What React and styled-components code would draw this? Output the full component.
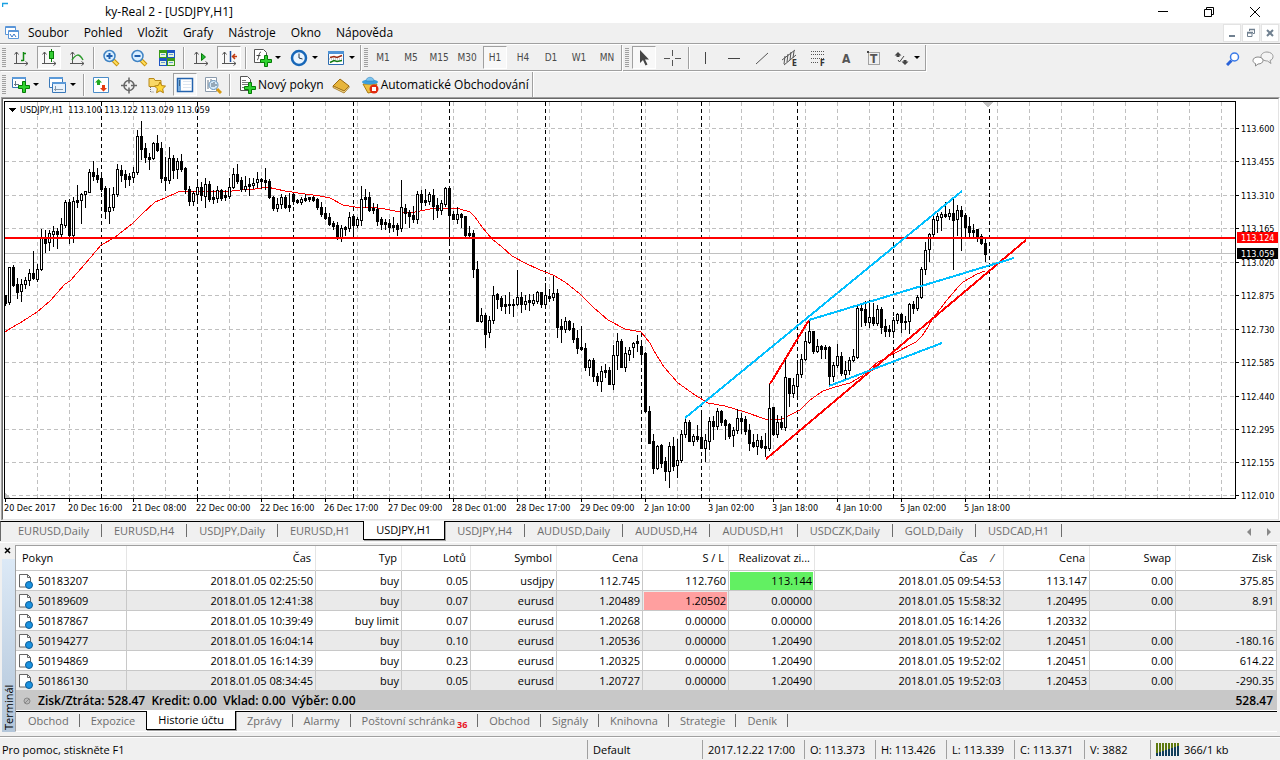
import React from 'react';
import styled, { createGlobalStyle, css } from 'styled-components';

const GlobalStyle = createGlobalStyle`
  * { box-sizing: border-box; }
  body {
    margin: 0;
    background: #f0f0f0;
    color: #000;
    font-family: "Open Sans", "Noto Sans", sans-serif;
    font-size: 11px;
    line-height: 16px;
  }
  button {
    margin: 0;
    padding: 0;
    border: 0;
    background: none;
    color: inherit;
    font: inherit;
    white-space: nowrap;
  }
  svg { display: block; flex: none; }
`;

const Page = styled.div`
  display: flex;
  flex-direction: column;
`;

/* ---------- title and menu ---------- */

const TitleBar = styled.header`
  display: flex;
  align-items: center;
  height: 23px;
  padding: 0 2px;
  background: #fff;
`;

const Title = styled.h1`
  flex: 1;
  margin: 0 0 0 76px;
  font-size: 12px;
  font-weight: 400;
`;

const WindowButton = styled.button`
  display: flex;
  align-items: center;
  justify-content: center;
  width: 46px;
  height: 21px;
`;

const MenuBar = styled.nav`
  display: flex;
  align-items: center;
  height: 21px;
  border-bottom: 1px solid #a0a0a0;
  padding: 0 1px 0 4px;
`;

const MenuList = styled.div`
  display: flex;
  flex: 1;
  gap: 15px;
  margin-left: 8px;
  font-size: 12px;
`;

const ChildButton = styled.button`
  display: flex;
  align-items: center;
  justify-content: center;
  width: 18px;
  height: 18px;
  margin-left: 1px;
  border: 1px solid #e3e3e3;
  background: #fff;
`;

/* ---------- toolbars ---------- */

const ToolRow = styled.div`
  display: flex;
  align-items: stretch;
  border-top: ${p => (p.$first ? '1px solid #fff' : '0')};
`;

const Band = styled.div`
  display: flex;
  align-items: center;
  gap: 4px;
  padding: 1px 2px;
  border-right: 1px solid #a0a0a0;
  box-shadow: 1px 0 0 #fff;
  margin-right: 1px;
  ${p => p.$ruled && css`
    border-bottom: 1px solid #a0a0a0;
    box-shadow: 1px 1px 0 #fff;
    margin-bottom: 1px;
  `}
`;

const Grip = styled.span`
  width: 4px;
  height: 20px;
  margin-right: -1px;
  background: repeating-linear-gradient(#a0a0a0 0 1px, #f0f0f0 1px 2px);
`;

const Separator = styled.span`
  width: 2px;
  height: 22px;
  border-left: 1px solid #a0a0a0;
  border-right: 1px solid #fff;
`;

const Tool = styled.button`
  display: flex;
  align-items: center;
  justify-content: ${p => (p.$wide ? 'flex-start' : 'center')};
  width: ${p => (p.$wide ? '33px' : '24px')};
  height: 23px;
  padding-left: ${p => (p.$wide ? '2px' : '0')};
  color: #4a4a4a;
  font-family: "DejaVu Sans Condensed", "Open Sans", sans-serif;
  font-size: 10px;
  ${p => p.$pressed && css`
    border: 1px solid;
    border-color: #a0a0a0 #fff #fff #a0a0a0;
    background: #f8f8f8;
  `}
`;

const LabelTool = styled(Tool)`
  width: auto;
  gap: 2px;
  padding: 0 1px 0 4px;
  color: #000;
  font-family: inherit;
  font-size: 12px;
`;

const Caret = styled.span`
  width: 0;
  margin-left: 2px;
  border: 3px solid transparent;
  border-top-color: #000;
  border-bottom: 0;
`;

const ToolEnd = styled.div`
  display: flex;
  align-items: center;
  gap: 12px;
  margin-left: auto;
  padding-right: 6px;
`;

/* ---------- chart ---------- */

const ChartOuter = styled.section`
  margin-left: 1px;
  border: 1px solid #a0a0a0;
  border-right-color: #fff;
  border-bottom: 0;
`;

const ChartInner = styled.div`
  border: 1px solid #696969;
  border-right-color: #e3e3e3;
  border-bottom-color: #e3e3e3;
  background: #fff;
`;

const Plot = styled.svg`
  width: 100%;
  height: auto;
  font-family: "DejaVu Sans Condensed", "Open Sans", sans-serif;
  font-size: 9px;
`;

const TabBar = styled.div`
  display: flex;
  height: 20px;
  margin-top: ${p => (p.$chart ? '1px' : '0')};
  padding-left: ${p => (p.$chart ? '5px' : '1px')};
  border-top: 1px solid #000;
  border-left: ${p => (p.$chart ? '1px solid #696969' : '0')};
`;

const Tab = styled.button`
  display: flex;
  align-items: center;
  height: 18px;
  padding: 0 ${p => (p.$chart ? '13px 0 12px' : '11px')};
  color: #6d6d6d;
  position: relative;
  &::after {
    content: "";
    position: absolute;
    right: 0;
    top: 2px;
    width: 1px;
    height: 13px;
    background: ${p => (p.$plain ? 'transparent' : '#6d6d6d')};
  }
  ${p => p.$active && css`
    height: 19px;
    margin-top: -1px;
    border: 1px solid #000;
    border-top: 0;
    box-shadow: 1px 1px 0 #a0a0a0;
    background: #fff;
    color: #000;
  `}
`;

const Unread = styled.sub`
  margin: 7px 0 0 2px;
  color: #e81123;
  font-size: 9px;
  font-weight: 700;
  line-height: 9px;
`;

const TabScroll = styled.div`
  display: flex;
  align-items: center;
  gap: 16px;
  margin-left: auto;
  padding-right: 9px;
`;

/* ---------- terminal ---------- */

const Terminal = styled.section`
  display: flex;
  margin-top: 1px;
  padding: 2px 3px 1px 0;
  border-top: 1px solid #fff;
`;

const Side = styled.div`
  display: flex;
  flex-direction: column;
  align-items: center;
  width: 15px;
`;

const SideTitle = styled.h2`
  flex: 1;
  width: 13px;
  margin: 3px 0 0 1px;
  padding-top: 2px;
  background: linear-gradient(#b3c6da, #dce9f6);
  font-size: 11px;
  font-weight: 400;
  line-height: 13px;
  writing-mode: vertical-rl;
  transform: rotate(180deg);
`;

const SideClose = styled.button`
  height: 11px;
  width: 13px;
  display: flex;
  align-items: center;
  justify-content: center;
`;

const Panel = styled.div`
  flex: 1;
  min-width: 0;
  border-left: 1px solid #a0a0a0;
  border-top: 1px solid #a0a0a0;
  border-bottom: 1px solid #fff;
`;

const Orders = styled.table`
  width: 100%;
  table-layout: fixed;
  border-collapse: separate;
  border-spacing: 0;
  background: #fff;
  border-bottom: 1px solid #fff;
`;

const Th = styled.th`
  height: 25px;
  padding: 0 4px 0 6px;
  border-right: 1px solid #e5e5e5;
  border-bottom: 1px solid #c8c8c8;
  font-weight: 400;
  text-align: ${p => (p.$left ? 'left' : 'right')};
  white-space: nowrap;
`;

const Row = styled.tr`
  background: ${p => (p.$odd ? '#eaeaea' : '#fff')};
`;

const Td = styled.td`
  height: 20px;
  padding: 0 1px;
  border-right: 1px solid #c8c8c8;
  border-bottom: 1px solid #c8c8c8;
  text-align: right;
  white-space: nowrap;
  line-height: 15px;
`;

const Mark = styled.span`
  display: block;
  padding: 2px 1px;
  line-height: 14px;
  background: ${p => p.$fill || 'transparent'};
`;

const Order = styled.span`
  display: flex;
  align-items: center;
  gap: 5px;
  margin-left: 2px;
`;

const Sum = styled.td`
  height: 19px;
  padding: 0 4px 0 7px;
  background: #c8c8c8;
  font-size: 12px;
  font-weight: 600;
  text-align: ${p => (p.$right ? 'right' : 'left')};
`;

const SumLine = styled.span`
  display: flex;
  align-items: center;
  gap: 7px;
  white-space: pre;
`;

/* ---------- status bar ---------- */

const StatusBar = styled.footer`
  display: grid;
  grid-template-columns: 1fr 115px 102px 71px 71px 68px 70px 66px 130px;
  align-items: center;
  margin-top: 3px;
  padding: 3px 0 1px;
  border-top: 1px solid #a0a0a0;
  box-shadow: inset 0 1px 0 #fff;
`;

const Status = styled.span`
  display: flex;
  align-items: center;
  gap: 4px;
  height: 19px;
  padding-left: ${p => (p.$first ? '2px' : '5px')};
  border-left: ${p => (p.$first ? '0' : '1px solid #a0a0a0')};
  white-space: nowrap;
`;

/* ---------- icons ---------- */

const Svg = ({ w = 18, h = 18, children, ...rest }) => (
  <svg width={w} height={h} viewBox={`0 0 ${w} ${h}`} fill="none" aria-hidden="true" {...rest}>
    {children}
  </svg>
);

const Axes = () => (
  <path d="M4.5 3v12M2 14.5h14M2.5 5.5l2-2.5 2 2.5M13.5 12.5l2.5 2-2.5 2" stroke="#555" />
);

const Plus = ({ x, y }) => (
  <path
    transform={`translate(${x} ${y})`}
    d="M4.500.5h3v4h4v3h-4v4h-3v-4h-4v-3h4z"
    fill="#2fd32f"
    stroke="#067a06"
  />
);

const Lens = ({ minus }) => (
  <Svg>
    <path d="M11 11l5 5" stroke="#c9930c" strokeWidth="4" />
    <path d="M11 11l4.500 4.500" stroke="#ffdf5e" strokeWidth="2" />
    <circle cx="7.500" cy="7" r="5.500" fill="#d9efff" stroke="#3f83c4" strokeWidth="1.500" />
    <path d={minus ? 'M4.500 7h6' : 'M4.500 7h6M7.500 4v6'} stroke="#1f5fae" strokeWidth="2" />
  </Svg>
);

const icons = {
  bars: <Svg><Axes /><path d="M11.500 3v9M9 11.500h2.500M11.500 4.500H14" stroke="#118a11" strokeWidth="1.500" /></Svg>,
  candles: <Svg><Axes /><path d="M11.500 0v13" stroke="#067a06" /><rect x="9.500" y="2.500" width="4" height="7" fill="#3c3" stroke="#067a06" /></Svg>,
  line: <Svg><Axes /><path d="M4 11c4-6 7-7 11 0" stroke="#2c9a2c" strokeWidth="1.500" /></Svg>,
  zoomIn: <Lens />,
  zoomOut: <Lens minus />,
  tile: (
    <Svg>
      <path d="M1 1h8v8H1zM9 9h8v8H9z" fill="#3a9a18" />
      <path d="M9 1h8v8H9zM1 9h8v8H1z" fill="#1d55c4" />
      <path d="M2 4h6v4H2zM10 4h6v4h-6zM2 12h6v4H2zM10 12h6v4h-6z" fill="#e8f6dc" />
      <path d="M3 5.500h4M11 5.500h4M3 13.500h4M11 13.500h4" stroke="#6a9ad0" />
    </Svg>
  ),
  scroll: <Svg><Axes /><path d="M9.500 4.500l4 3.500-4 3.500z" fill="#2b3" stroke="#067a06" /></Svg>,
  shift: <Svg><Axes /><path d="M10.500 2v11" stroke="#1a4c9c" strokeWidth="1.500" /><path d="M17 7.500h-4M15 5l-2.500 2.500L15 10" stroke="#c03a10" strokeWidth="1.500" /></Svg>,
  indicators: (
    <Svg w={20}>
      <path d="M1.500.5h9l3 3v10h-12z" fill="#fff" stroke="#555" />
      <path d="M4 11c2 0 1.500-8 4-8M3.500 6.500h4" stroke="#444" />
      <Plus x={7} y={6} />
    </Svg>
  ),
  clock: (
    <Svg w={20}>
      <circle cx="9" cy="9" r="7" fill="#eaf5ff" stroke="#1767b8" strokeWidth="2.500" />
      <path d="M9 4.500V9l3.500 1" stroke="#234" />
    </Svg>
  ),
  template: (
    <Svg w={20}>
      <path d="M1.500 2.500h15v13h-15z" fill="#fff" stroke="#2e6cb0" />
      <path d="M1 2h16v3H1z" fill="#4f93d6" />
      <path d="M3 8.500l4-1 3 1 5-2" stroke="#9c2a10" strokeWidth="1.500" />
      <path d="M3 13.500l4-2 3 1 5-1" stroke="#127a12" strokeWidth="1.500" />
      <path d="M2 10h14" stroke="#999" strokeDasharray="1 1" />
    </Svg>
  ),
  cursor: <Svg><path d="M5 1v13l3-3 2.500 5.500 2-1L10 10.500h4z" fill="#444" /></Svg>,
  cross: <Svg><path d="M9.500 1v6M9.500 11v6M1 9.500h6M12 9.500h6" stroke="#555" /></Svg>,
  vline: <Svg><path d="M8.500 3v12" stroke="#444" /></Svg>,
  hline: <Svg><path d="M3 9.500h12" stroke="#444" /></Svg>,
  trend: <Svg><path d="M3 15L15 4" stroke="#555" /></Svg>,
  channel: (
    <Svg>
      <path d="M1 11L14 1M3 16L15 6M4 7l-1 8M7 5L6 13M10 3L9 11M13 2l-1 7" stroke="#555" />
      <text x="11" y="17" fill="#333" fontSize="8" fontWeight="700">E</text>
    </Svg>
  ),
  fibo: (
    <Svg>
      <path d="M2 2.500h14M2 5.500h14M2 9.500h14M2 13.500h8" stroke="#555" strokeDasharray="1 1" />
      <text x="11" y="17" fill="#333" fontSize="8" fontWeight="700">F</text>
    </Svg>
  ),
  text: <Svg><text x="5" y="14" fill="#555" fontSize="12" fontWeight="700">A</text></Svg>,
  label: (
    <Svg>
      <path d="M3.500 3.500h11v12h-11z" stroke="#555" strokeDasharray="1 1" />
      <path d="M2 2h2v2H2z" fill="#444" />
      <text x="5" y="14" fill="#555" fontSize="12" fontWeight="700">T</text>
    </Svg>
  ),
  shapes: (
    <Svg w={20}>
      <path d="M6 3l3.500 3.500H7.500V8h-3V6.500h-2zM13 16l-3.500-3.500h2V11h3v1.500h2z" fill="#444" />
      <path d="M6 11l1.500 2L12 7" stroke="#444" />
    </Svg>
  ),
  newChart: (
    <Svg w={20}>
      <path d="M1.500 1.500h13v10h-13z" fill="#fff" stroke="#3a78b8" />
      <path d="M1 1h14v2H1z" fill="#5c9ad8" />
      <path d="M4.500 5v5M3 8.500h5" stroke="#678" />
      <Plus x={7} y={5} />
    </Svg>
  ),
  profiles: (
    <Svg w={20}>
      <path d="M1.500 1.500h13v10h-13z" fill="#fff" stroke="#3a78b8" />
      <path d="M1 1h14v2H1z" fill="#5c9ad8" />
      <path d="M4.500 6.500h13v10h-13z" fill="#eaf3fc" stroke="#3a78b8" />
      <path d="M4 6h14v2H4z" fill="#5c9ad8" />
      <path d="M7.500 10v5M6 13.500h9" stroke="#89a" />
    </Svg>
  ),
  market: (
    <Svg>
      <path d="M1.500 1.500h15v15h-15z" fill="#fff" stroke="#4a8cc8" />
      <path d="M6.500 3l3.500 3.500H8V9H5V6.500H3z" fill="#2a2" />
      <path d="M11.500 15.500L8 12h2V9h3v3h2z" fill="#e63a10" />
    </Svg>
  ),
  target: (
    <Svg>
      <circle cx="9" cy="9.500" r="5" stroke="#666" strokeWidth="1.500" />
      <path d="M9 1.500v6M9 11.500v6M1 9.500h6M11 9.500h6" stroke="#666" strokeWidth="1.500" />
    </Svg>
  ),
  folder: (
    <Svg>
      <path d="M1 2.500h5l1 2h6v6H1z" fill="#f9d867" stroke="#b98a1c" />
      <path d="M12 6l1.700 3.600 3.800.500-2.800 2.700.700 4-3.400-2-3.400 2 .700-4L6.500 10l3.800-.500z" fill="#ffd738" stroke="#b3800c" />
      <path d="M2.500 11v5H6" stroke="#777" strokeDasharray="1 1" />
    </Svg>
  ),
  navigator: (
    <Svg>
      <path d="M1.500 2.500h15v13h-15z" fill="#fff" stroke="#2463ae" strokeWidth="1.500" />
      <path d="M2 3h3v12H2z" fill="#74a9dc" />
      <path d="M7 5.500h8M7 8.500h8M7 11.500h8" stroke="#dde6f0" />
      <path d="M3 5h1M3 7h1M3 9h1" stroke="#123" />
    </Svg>
  ),
  tester: (
    <Svg>
      <path d="M1.500 1.500h11v14h-11z" fill="#fff" stroke="#8a9aac" />
      <path d="M4 4v9M7 3v8" stroke="#678" />
      <path d="M13 13l4 4" stroke="#d79a10" strokeWidth="3" />
      <circle cx="9.500" cy="9" r="4.500" fill="#d5eafa" stroke="#6692b8" />
      <path d="M8 11V7M10 11V6M12 10V8" stroke="#567" />
    </Svg>
  ),
  order: (
    <Svg w={17}>
      <path d="M1.500.5h7l3 3v11h-10z" fill="#fff" stroke="#555" />
      <path d="M3 4.500h4M3 6.500h6M3 8.500h6M3 11.500h4" stroke="#777" />
      <Plus x={5} y={6} />
    </Svg>
  ),
  editor: (
    <Svg>
      <path d="M1 10l7-7 9 7-5 5z" fill="#e7b53c" stroke="#9c6a10" />
      <path d="M1 10v1.500L12 17l5-5.500V10l-5 5z" fill="#f6dc8c" stroke="#9c6a10" strokeWidth=".8" />
    </Svg>
  ),
  robot: (
    <Svg>
      <path d="M2 8h14l-4 8-5 1z" fill="#f0c040" stroke="#a87a10" />
      <ellipse cx="9" cy="6" rx="8" ry="2.500" fill="#3d9fdc" />
      <path d="M5 5c0-5 8-5 8 0z" fill="#7cc4ee" stroke="#2a7db8" strokeWidth=".5" />
      <circle cx="13" cy="13" r="4.500" fill="#e02a10" />
      <path d="M11 11h4v4h-4z" fill="#fff" />
    </Svg>
  ),
};

const DocIcon = () => (
  <Svg w={14} h={16}>
    <path d="M.5 1.500h8l3 3v9.500H.5z" fill="#fff" stroke="#666" />
    <path d="M8.500 1.500v3h3" stroke="#666" />
    <circle cx="10" cy="12" r="3.500" fill="#1c93e0" stroke="#0a5c96" />
  </Svg>
);

/* ---------- data ---------- */

const frames = ['M1', 'M5', 'M15', 'M30', 'H1', 'H4', 'D1', 'W1', 'MN'];

const chartTabs = [
  'EURUSD,Daily', 'EURUSD,H4', 'USDJPY,Daily', 'EURUSD,H1', 'USDJPY,H1', 'USDJPY,H4',
  'AUDUSD,Daily', 'AUDUSD,H4', 'AUDUSD,H1', 'USDCZK,Daily', 'GOLD,Daily', 'USDCAD,H1',
];

const terminalTabs = [
  'Obchod', 'Expozice', 'Historie účtu', 'Zprávy', 'Alarmy', 'Poštovní schránka',
  'Obchod', 'Signály', 'Knihovna', 'Strategie', 'Deník',
];

const columns = [
  ['Pokyn', 111], ['Čas', 189], ['Typ', 86], ['Lotů', 69], ['Symbol', 86], ['Cena', 86],
  ['S / L', 86], ['Realizovat zi...', 86], ['Čas', 189], ['Cena', 86], ['Swap', 86], ['Zisk', 101],
];

const orders = [
  ['50183207', '2018.01.05 02:25:50', 'buy', '0.05', 'usdjpy', '112.745', '112.760', '113.144', '2018.01.05 09:54:53', '113.147', '0.00', '375.85'],
  ['50189609', '2018.01.05 12:41:38', 'buy', '0.07', 'eurusd', '1.20489', '1.20502', '0.00000', '2018.01.05 15:58:32', '1.20495', '0.00', '8.91'],
  ['50187867', '2018.01.05 10:39:49', 'buy limit', '0.07', 'eurusd', '1.20268', '0.00000', '0.00000', '2018.01.05 16:14:26', '1.20332', '', ''],
  ['50194277', '2018.01.05 16:04:14', 'buy', '0.10', 'eurusd', '1.20536', '0.00000', '1.20490', '2018.01.05 19:52:02', '1.20451', '0.00', '-180.16'],
  ['50194869', '2018.01.05 16:14:39', 'buy', '0.23', 'eurusd', '1.20325', '0.00000', '1.20490', '2018.01.05 19:52:02', '1.20451', '0.00', '614.22'],
  ['50186130', '2018.01.05 08:34:45', 'buy', '0.05', 'eurusd', '1.20727', '0.00000', '1.20490', '2018.01.05 19:52:03', '1.20453', '0.00', '-290.35'],
];

// closed by take profit / stop loss
const fills = { '0-7': '#62f062', '1-6': '#ff9f9f' };

// high, body top, body bottom, low, direction
const candles = `
195 195 203 205 d|167 167 202 204 u|165 167 185 186 d|178 184 192 198 d|179 184 191 201 u|177 180 184 188 u
169 173 180 185 u|151 173 178 179 d|164 169 179 181 u|129 138 169 170 u|130 137 143 152 d|130 133 142 150 u
126 131 134 146 u|128 131 134 148 d|118 124 134 136 u|100 102 125 127 u|99 102 135 143 d|97 101 135 142 u
85 100 102 107 d|93 94 100 123 u|91 91 94 107 u|69 72 92 92 u|61 72 76 80 d|68 75 79 82 d
75 78 89 91 d|86 88 111 118 d|88 107 111 123 u|87 94 107 110 u|64 69 94 96 u|65 70 75 81 d
70 74 79 87 d|73 76 79 85 d|67 72 77 82 u|30 36 72 74 u|21 36 49 59 d|43 48 57 62 d
53 57 59 69 d|42 43 58 59 u|35 43 50 51 d|42 48 78 82 d|57 77 80 90 d|47 58 80 83 u
55 58 70 78 d|58 61 69 78 u|54 61 69 71 d|67 68 89 93 d|86 89 101 105 d|91 93 101 105 u
80 87 94 99 u|82 87 95 100 d|78 84 96 107 u|81 84 99 101 d|90 97 99 103 d|86 90 98 102 u
89 90 98 100 d|90 95 97 100 d|78 87 96 98 u|68 74 87 88 u|64 74 81 83 d|77 80 89 91 d
76 86 89 91 u|78 84 86 95 d|78 83 85 88 u|72 79 82 87 u|78 79 81 88 d|68 80 82 89 d
79 81 97 98 d|96 97 108 110 d|98 104 108 111 u|94 97 104 108 u|95 97 107 108 d|93 105 107 111 d
93 94 101 104 d|99 100 102 103 d|97 99 102 104 u|94 98 100 101 d|97 97 99 101 d|96 97 100 101 d
98 99 107 109 d|102 107 114 116 d|107 113 118 119 d|113 117 124 125 d|121 123 126 129 d|122 125 138 139 d
125 128 138 141 u|126 127 129 135 d|112 117 128 131 u|115 116 125 135 d|117 119 125 127 u|86 99 120 125 u
89 97 99 107 d|92 97 110 111 d|103 108 110 113 d|104 109 121 125 d|117 119 124 129 d|119 122 124 129 d
119 123 127 132 d|117 125 127 131 d|123 125 129 135 d|80 107 128 131 u|104 108 113 123 d|110 112 116 127 d
106 115 119 122 d|91 94 119 123 u|90 94 102 109 d|89 100 102 105 d|92 94 101 104 u|89 95 106 119 d
98 105 110 117 d|100 103 110 114 u|87 88 104 106 u|86 88 115 143 d|111 114 119 119 d|107 114 119 123 u
113 114 117 127 d|116 116 135 137 d|126 133 135 136 d|130 133 169 177 d|161 169 221 221 d|208 215 221 222 u
213 215 234 247 d|216 220 232 237 u|186 195 220 223 u|193 194 199 208 d|196 198 206 210 d|195 204 206 213 d
192 204 205 213 d|199 204 205 216 d|170 197 204 205 u|192 197 204 212 d|195 201 204 209 u|194 200 202 210 d
194 200 203 205 u|191 192 201 203 u|192 192 204 207 d|183 195 204 208 u|189 196 198 201 d|176 193 197 200 u
189 193 227 237 d|219 226 229 242 d|217 221 229 232 u|220 221 229 230 d|223 228 239 242 d|230 238 248 253 d
226 247 249 250 d|243 248 267 270 d|259 260 267 275 u|258 260 276 281 d|273 276 281 285 d|266 271 281 291 u
264 270 272 277 d|267 270 284 284 d|245 255 284 289 u|233 241 255 269 u|239 241 267 267 d|247 253 267 271 u
247 250 254 260 u|242 243 247 257 u|235 241 243 251 d|240 246 254 262 d|252 253 311 312 d|306 311 343 343 d
334 341 368 373 d|345 346 368 369 u|344 345 363 367 d|357 361 371 380 d|342 346 371 387 u|337 346 366 370 d
339 360 365 377 u|330 334 360 362 u|318 322 334 337 u|320 322 341 341 d|334 336 341 345 u|325 336 339 341 d
313 337 348 348 d|334 340 348 361 u|317 321 341 349 u|316 321 326 339 d|308 311 326 329 u|310 311 322 325 d
319 320 325 339 d|323 324 336 338 d|327 330 335 346 u|309 318 330 333 u|313 318 321 333 d|316 319 331 334 d
324 330 343 350 d|334 342 346 347 d|334 340 346 354 u|336 340 347 348 d|333 346 348 356 d|284 308 348 350 u
307 307 334 335 d|315 322 334 337 u|316 322 327 329 d|258 277 327 330 u|278 278 293 306 d|278 285 293 297 u
260 274 286 297 u|254 259 274 277 u|232 241 259 260 u|221 231 242 243 u|231 231 251 253 d|239 246 251 252 u
245 246 249 258 d|245 247 249 258 d|246 247 276 286 d|262 265 276 281 u|244 256 265 267 u|252 256 273 275 d
261 270 274 278 u|257 260 270 274 u|249 256 260 261 u|204 208 257 258 u|205 208 210 226 d|201 209 222 225 d
200 217 222 227 u|203 217 223 225 d|205 209 223 225 u|207 209 227 233 d|219 226 231 236 d|225 229 231 236 d
217 220 231 237 u|213 214 220 223 u|213 214 222 232 d|216 221 222 229 d|203 204 221 233 u|201 204 208 213 d
195 197 208 210 u|167 169 197 198 u|142 150 169 174 u|133 134 149 161 u|113 119 134 137 u|113 116 120 132 u
112 114 117 130 u|102 114 116 117 d|109 113 116 119 u|97 113 120 169 d|105 110 119 135 u|106 110 116 150 d
113 115 127 137 d|117 126 132 136 d|124 130 132 136 d|129 129 137 141 d|134 136 143 144 d|138 143 154 161 d
`.trim().split(/[|\n]/).map(c => c.split(' '));

const average =
  '5,232 11,228 20,223 37,212 50,201 65,184 70,181 85,164 101,145 114,138 133,123 142,114 155,102 165,98 ' +
  '178,92 190,91 205,91 225,92 240,90 255,89 267,87 285,91 305,94 320,96 330,98 343,105 355,107 370,107 ' +
  '385,109 400,112 415,112 430,109 445,108 460,109 470,112 475,117 482,127 492,139 502,147 512,156 525,163 ' +
  '540,170 553,175 565,182 580,194 593,207 608,220 625,229 641,232 650,243 654,251 664,267 678,283 695,295 ' +
  '708,303 725,306 745,312 765,319 780,320 788,316 800,310 810,300 823,291 835,287 850,283 862,276 878,262 ' +
  '895,253 916,242 922,236 928,227 933,218 947,200 958,187 963,182 977,174 985,171';

const prices = [
  ['113.600', 28], ['113.455', 61], ['113.310', 95], ['113.165', 128], ['113.020', 162], ['112.875', 195],
  ['112.730', 229], ['112.585', 262], ['112.440', 296], ['112.295', 329], ['112.155', 362], ['112.010', 395],
];

const times = [
  '20 Dec 2017', '20 Dec 16:00', '21 Dec 08:00', '22 Dec 00:00', '22 Dec 16:00', '26 Dec 17:00',
  '27 Dec 09:00', '28 Dec 01:00', '28 Dec 17:00', '29 Dec 09:00', '2 Jan 10:00', '3 Jan 02:00',
  '3 Jan 18:00', '4 Jan 10:00', '5 Jan 02:00', '5 Jan 18:00',
];

const days = [101, 197, 293, 353, 449, 545, 641, 701, 797, 893, 989];

function Chart() {
  return (
    <Plot viewBox="3 -1 1275 420" role="img" aria-label="USDJPY,H1">
      <g shapeRendering="crispEdges" fill="none">
        <g stroke="#c0c0c0" strokeDasharray="4 3">
          {prices.map(([p, y]) => <path key={p} d={`M5 ${y}.5H1235`} />)}
          {Array.from({ length: 38 }, (_, i) => <path key={i} d={`M${37.5 + 32 * i} 2V398`} />)}
        </g>
        <g stroke="#000" strokeDasharray="4 3">
          {days.map(x => <path key={x} d={`M${x}.5 2V398`} />)}
        </g>
        <path d="M5 153.5H1235" stroke="#c0c0c0" />
        <polyline points={average} stroke="#f00" />
        {candles.map(([high, top, bottom, low, dir], i) => (
          <g key={i} fill="#000">
            <rect x={5 + 4 * i} y={high} width="1" height={low - high + 1} />
            <rect x={4 + 4 * i} y={top} width="3" height={bottom - top + 1} />
            {dir === 'u' && <rect x={5 + 4 * i} y={+top + 1} width="1" height={bottom - top - 1} fill="#fff" />}
          </g>
        ))}
        <g strokeWidth="2">
          <path d="M5 138H1235M766 359L1026 140M770 284L809 220" stroke="#f00" />
          <path d="M685 318L962 91M809 220L1014 158M829 286L942 243" stroke="#00bfff" />
        </g>
        <path d="M4.5 398V1.500H1235.500V398.500H4" stroke="#000" />
        <path d="M982 2h11l-5 5z" fill="#c0c0c0" />
        <path d="M5 393v5h5z" fill="#c0c0c0" />
        {prices.map(([p, y]) => <path key={p} d={`M1236 ${y}.5h3`} stroke="#000" />)}
        {times.map((t, i) => <path key={t} d={`M${5.5 + 64 * i} 399v3`} stroke="#000" />)}
        <path d="M8 8h8l-4 4z" fill="#000" />
      </g>
      <text x="20" y="13" xmlSpace="preserve">USDJPY,H1  113.100 113.122 113.029 113.059</text>
      {prices.map(([p, y]) => <text key={p} x="1241" y={y + 4}>{p}</text>)}
      {times.map((t, i) => <text key={t} x={4 + 64 * i} y="411">{t}</text>)}
      <path d="M1237 132h41v11h-41z" fill="#f00" />
      <path d="M1237 148h41v11h-41z" fill="#000" />
      <text x="1241" y="141" fill="#fff">113.124</text>
      <text x="1241" y="157" fill="#fff">113.059</text>
    </Plot>
  );
}

const ToolButton = ({ icon, label, drop, pressed }) => (
  <Tool type="button" aria-label={label} $wide={drop} $pressed={pressed}>
    {icons[icon]}
    {drop && <Caret />}
  </Tool>
);

export default function App() {
  return (
    <Page>
      <GlobalStyle />
      <TitleBar>
        <Svg w={27} h={20}><path d="M0 1.500h6M.5 1v4" stroke="#1ba1e2" strokeWidth="1.500" /></Svg>
        <Title>ky-Real 2 - [USDJPY,H1]</Title>
        <WindowButton type="button" aria-label="Minimalizovat">
          <Svg w={12} h={12}><path d="M1 5.500h10" stroke="#000" /></Svg>
        </WindowButton>
        <WindowButton type="button" aria-label="Obnovit">
          <Svg w={12} h={12}><path d="M1.500 3.500h7v7h-7zM3.500 3V1.500h7v7H9" stroke="#000" /></Svg>
        </WindowButton>
        <WindowButton type="button" aria-label="Zavřít">
          <Svg w={12} h={12}><path d="M1 1l10 10M11 1L1 11" stroke="#000" /></Svg>
        </WindowButton>
      </TitleBar>

      <MenuBar>
        <Svg w={16} h={16}>
          <path d="M1.500 1.500h10v8h-10z" fill="#fff" stroke="#5b96d8" />
          <path d="M4.500 5.500h10v8h-10z" fill="#fff" stroke="#5b96d8" />
          <path d="M1 2.500h10M4 6.500h10" stroke="#5b96d8" />
          <path d="M6 9l2 3 2-3 2 3" stroke="#3a78c8" />
        </Svg>
        <MenuList>
          {['Soubor', 'Pohled', 'Vložit', 'Grafy', 'Nástroje', 'Okno', 'Nápověda'].map(m => (
            <button type="button" key={m}>{m}</button>
          ))}
        </MenuList>
        <ChildButton type="button" aria-label="Minimalizovat graf">
          <Svg w={10} h={10}><path d="M2 8h6" stroke="#708090" strokeWidth="2" /></Svg>
        </ChildButton>
        <ChildButton type="button" aria-label="Obnovit graf">
          <Svg w={10} h={10}>
            <path d="M3.500 3V1.500h5v4H7M1.500 5h4.500v3.500H1.500z" stroke="#708090" />
            <path d="M3 1.500h6M1 4.500h6" stroke="#708090" strokeWidth="1.500" />
          </Svg>
        </ChildButton>
        <ChildButton type="button" aria-label="Zavřít graf">
          <Svg w={10} h={10}><path d="M2 2l6 6M8 2L2 8" stroke="#708090" strokeWidth="2" /></Svg>
        </ChildButton>
      </MenuBar>

      <ToolRow $first>
        <Band $ruled>
          <Grip />
          <ToolButton icon="bars" label="Sloupcový graf" />
          <ToolButton icon="candles" label="Svíčkový graf" pressed />
          <ToolButton icon="line" label="Čárový graf" />
          <Separator />
          <ToolButton icon="zoomIn" label="Přiblížit" />
          <ToolButton icon="zoomOut" label="Oddálit" />
          <ToolButton icon="tile" label="Dlaždice" />
          <Separator />
          <ToolButton icon="scroll" label="Automatický posun" />
          <ToolButton icon="shift" label="Odsazení grafu" pressed />
          <Separator />
          <ToolButton icon="indicators" label="Indikátory" drop />
          <ToolButton icon="clock" label="Periody" drop />
          <ToolButton icon="template" label="Šablony" drop />
        </Band>
        <Band $ruled>
          <Grip />
          {frames.map(f => <Tool type="button" key={f} $pressed={f === 'H1'}>{f}</Tool>)}
        </Band>
        <Band $ruled>
          <Grip />
          <ToolButton icon="cursor" label="Kurzor" pressed />
          <ToolButton icon="cross" label="Zaměřovač" />
          <Separator />
          <ToolButton icon="vline" label="Svislá čára" />
          <ToolButton icon="hline" label="Vodorovná čára" />
          <ToolButton icon="trend" label="Trendová čára" />
          <ToolButton icon="channel" label="Kanál" />
          <ToolButton icon="fibo" label="Fibonacci" />
          <ToolButton icon="text" label="Text" />
          <ToolButton icon="label" label="Popisek" />
          <ToolButton icon="shapes" label="Šipky" drop />
        </Band>
        <ToolEnd>
          <button type="button" aria-label="Hledat">
            <Svg w={14} h={14}>
              <path d="M1 13l4.500-4.500" stroke="#2a62d8" strokeWidth="3" />
              <circle cx="8.500" cy="5" r="4" fill="#fff" stroke="#3a7ae8" strokeWidth="1.500" />
            </Svg>
          </button>
          <button type="button" aria-label="Zprávy">
            <Svg w={22} h={16}>
              <path d="M15 1c3.500 0 6 2 6 4.500S19.500 9 18 9.500l1 3-3.500-2.500C12 10 9 8 9 5.500S11.500 1 15 1z" fill="#f4f4f4" stroke="#999" />
              <path d="M6 6c3 0 5 1.500 5 3.500S9 13 6 13l-2.500 2v-2.500C2 12 1 11 1 9.500 1 7.500 3 6 6 6z" fill="#fff" stroke="#888" />
            </Svg>
          </button>
        </ToolEnd>
      </ToolRow>

      <ToolRow>
        <Band>
          <Grip />
          <ToolButton icon="newChart" label="Nový graf" drop />
          <ToolButton icon="profiles" label="Profily" drop />
          <Separator />
          <ToolButton icon="market" label="Tržní nabídka" />
          <ToolButton icon="target" label="Datové okno" />
          <ToolButton icon="folder" label="Navigátor" />
          <ToolButton icon="navigator" label="Terminál" pressed />
          <ToolButton icon="tester" label="Tester strategií" />
          <Separator />
          <LabelTool type="button">{icons.order}Nový pokyn</LabelTool>
          <ToolButton icon="editor" label="MetaEditor" />
          <LabelTool type="button">{icons.robot}Automatické Obchodování</LabelTool>
        </Band>
      </ToolRow>

      <ChartOuter>
        <ChartInner><Chart /></ChartInner>
      </ChartOuter>
      <TabBar $chart>
        {chartTabs.map(t => (
          <Tab type="button" key={t} $chart $active={t === 'USDJPY,H1'} $plain={t === 'EURUSD,H1' || t === 'USDJPY,H1'}>{t}</Tab>
        ))}
        <TabScroll>
          <button type="button" aria-label="Předchozí"><Svg w={4} h={8}><path d="M4 0v8L0 4z" fill="#888" /></Svg></button>
          <button type="button" aria-label="Další"><Svg w={4} h={8}><path d="M0 0v8l4-4z" fill="#888" /></Svg></button>
        </TabScroll>
      </TabBar>

      <Terminal>
        <Side>
          <SideClose type="button" aria-label="Zavřít terminál">
            <Svg w={7} h={7}><path d="M1 1l5 5M6 1L1 6" stroke="#000" strokeWidth="1.500" /></Svg>
          </SideClose>
          <SideTitle>Terminál</SideTitle>
        </Side>
        <Panel>
          <Orders>
            <colgroup>
              {columns.map(([, w], i) => <col key={i} style={{ width: w }} />)}
            </colgroup>
            <thead>
              <tr>
                {columns.map(([name], i) => (
                  <Th key={i} $left={i === 0}>
                    {name}{i === 8 && <>&nbsp;&nbsp;&nbsp;&nbsp; ⁄&nbsp;&nbsp;</>}
                  </Th>
                ))}
              </tr>
            </thead>
            <tbody>
              {orders.map((row, r) => (
                <Row key={r} $odd={r % 2 === 1}>
                  {row.map((cell, c) => (
                    <Td key={c}>
                      {c === 0 ? <Order><DocIcon />{cell}</Order> : <Mark $fill={fills[`${r}-${c}`]}>{cell}</Mark>}
                    </Td>
                  ))}
                </Row>
              ))}
            </tbody>
            <tfoot>
              <tr>
                <Sum colSpan={11}>
                  <SumLine>
                    <Svg w={8} h={8}><circle cx="4" cy="4" r="3" fill="#bbb" stroke="#888" /><path d="M2 6l4-4" stroke="#888" /></Svg>
                    {'Zisk/Ztráta: 528.47  Kredit: 0.00  Vklad: 0.00  Výběr: 0.00'}
                  </SumLine>
                </Sum>
                <Sum $right>528.47</Sum>
              </tr>
            </tfoot>
          </Orders>
          <TabBar>
            {terminalTabs.map((t, i) => (
              <Tab type="button" key={i} $active={i === 2} $plain={i === 1 || i === 2}>
                {t}{i === 5 && <Unread>36</Unread>}
              </Tab>
            ))}
          </TabBar>
        </Panel>
      </Terminal>

      <StatusBar>
        <Status $first>Pro pomoc, stiskněte F1</Status>
        <Status>Default</Status>
        <Status>2017.12.22 17:00</Status>
        <Status>O: 113.373</Status>
        <Status>H: 113.426</Status>
        <Status>L: 113.339</Status>
        <Status>C: 113.371</Status>
        <Status>V: 3882</Status>
        <Status>
          <Svg w={24} h={13} shapeRendering="crispEdges">
            <path d="M1 0v13M4 0v13M7 0v13M10 0v13M13 0v13M16 0v13M19 0v13M22 0v13" stroke="#5f7a10" strokeWidth="2" />
            <path d="M1 10v3M4 9v4M7 8v5M10 7v6M13 6v7M16 5v8M19 4v9M22 3v10" stroke="#123f5c" strokeWidth="2" />
          </Svg>
          366/1 kb
        </Status>
      </StatusBar>
    </Page>
  );
}
